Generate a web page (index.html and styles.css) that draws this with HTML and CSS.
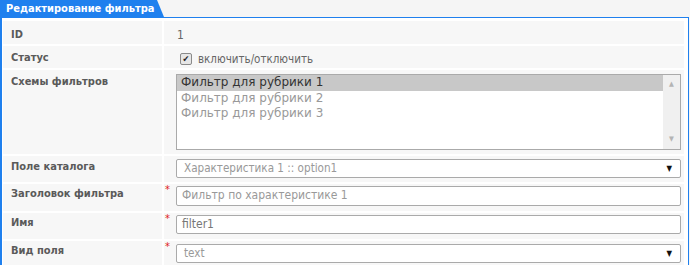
FILE: index.html
```html
<!DOCTYPE html>
<html lang="ru">
<head>
    <meta charset="UTF-8">
    <title>Редактирование фильтра</title>
    <link rel="stylesheet" href="styles.css">
</head>
<body>
    <div class="tab">Редактирование фильтра</div>
    <div class="box">
        <div class="row r-id">
            <div class="lbl">ID</div>
            <div class="val"><span class="plain">1</span></div>
        </div>
        <div class="row r-status">
            <div class="lbl">Статус</div>
            <div class="val">
                <span class="check"><span class="box-ch">&#10004;</span>включить/отключить</span>
            </div>
        </div>
        <div class="row r-list">
            <div class="lbl">Схемы фильтров</div>
            <div class="val">
                <div class="listbox">
                    <div class="opts">
                        <div class="opt sel">Фильтр для рубрики 1</div>
                        <div class="opt">Фильтр для рубрики 2</div>
                        <div class="opt">Фильтр для рубрики 3</div>
                    </div>
                    <div class="scroll"><span>&#9650;</span><span>&#9660;</span></div>
                </div>
            </div>
        </div>
        <div class="row r-cat">
            <div class="lbl">Поле каталога</div>
            <div class="val">
                <div class="field select">Характеристика 1 :: option1<span class="arr">&#9660;</span></div>
            </div>
        </div>
        <div class="row r-title">
            <div class="lbl">Заголовок фильтра</div>
            <div class="val">
                <span class="req">*</span>
                <div class="field">Фильтр по характеристике 1</div>
            </div>
        </div>
        <div class="row r-name">
            <div class="lbl">Имя</div>
            <div class="val">
                <span class="req">*</span>
                <div class="field dark">filter1</div>
            </div>
        </div>
        <div class="row r-type">
            <div class="lbl">Вид поля</div>
            <div class="val">
                <span class="req">*</span>
                <div class="field select">text<span class="arr">&#9660;</span></div>
            </div>
        </div>
    </div>
</body>
</html>
```

FILE: styles.css
```css
*{
    box-sizing: border-box;
}
body{
    margin: 0;
    background-color: #f5f5f5;
    font-family: "DejaVu Sans Condensed", "Liberation Sans", sans-serif;
    color: #555;
    overflow: hidden;
    height: 265px;
}
.tab{
    width: 164px;
    height: 17px;
    padding-left: 6px;
    background-color: #1f80ee;
    color: white;
    font-size: 11px;
    font-weight: bold;
    line-height: 17px;
    white-space: nowrap;
    clip-path: polygon(0 0, 157px 0, 164px 17px, 0 17px);
}
.box{
    width: 689px;
    height: 260px;
    border: 1px solid #1f80ee;
    border-left-width: 2px;
    background-color: white;
    padding: 3px 4px 0 1px;
    display: flex;
    flex-direction: column;
    gap: 2px;
}
.row{
    display: grid;
    grid-template-columns: 159px 1fr;
    gap: 2px;
    flex-shrink: 0;
}
.lbl,
.val{
    background-color: #f7f7f7;
}
.lbl{
    padding: 7px 0 0 8px;
    font-size: 11px;
    font-weight: bold;
    color: #5a5a5a;
}
.val{
    position: relative;
    padding: 3px 3px 0 12px;
    font-size: 12px;
}
.r-id{ height: 23px; }
.r-status{ height: 22px; }
.r-list{ height: 84px; }
.r-cat{ height: 26px; }
.r-title{ height: 27px; }
.r-name{ height: 26px; }
.r-type{ height: 26px; }
.r-status .lbl{ padding-top: 5px; }
.r-list .lbl{ padding-top: 5px; }
.r-cat .lbl{ padding-top: 4px; }
.r-title .lbl{ padding-top: 3px; }
.r-name .lbl{ padding-top: 3px; }
.r-type .lbl{ padding-top: 3px; }
.r-title .val,
.r-name .val{ padding-top: 2px; }

.plain{
    display: block;
    padding: 4px 0 0 1px;
    color: #666;
}
.check{
    display: flex;
    align-items: center;
    gap: 6px;
    font-size: 11.5px;
    color: #666;
    padding: 3px 0 0 4px;
}
.box-ch{
    width: 12px;
    height: 12px;
    border: 1px solid #8a8a8a;
    border-radius: 2px;
    background-color: #e6e6e6;
    color: #222;
    font-size: 9px;
    line-height: 11px;
    text-align: center;
}
.listbox{
    display: flex;
    height: 76px;
    margin-top: 1px;
    border: 1px solid #aaa;
    background-color: white;
}
.opts{
    flex: 1;
}
.opt{
    font-family: "DejaVu Sans", Verdana, sans-serif;
    color: #999;
    font-size: 12px;
    line-height: 15.5px;
    padding-left: 4px;
}
.opt.sel{
    background-color: #c8c8c8;
    color: #333;
}
.scroll{
    width: 17px;
    background-color: #f0f0f0;
    display: flex;
    flex-direction: column;
    justify-content: space-between;
    align-items: center;
    color: #b4b4b4;
    font-size: 7px;
    padding: 5px 0 6px;
}
.field{
    position: relative;
    height: 19px;
    border: 1px solid #aaa;
    border-radius: 2px;
    background-color: white;
    color: #999;
    font-size: 12px;
    line-height: 17px;
    padding-left: 5px;
}
.r-title .field{
    height: 20px;
}
.field.dark{
    color: #777;
}
.select{
    padding-left: 7px;
    font-size: 11.6px;
}
.arr{
    position: absolute;
    right: 8px;
    top: 0;
    color: #111;
    font-size: 8px;
}
.req{
    position: absolute;
    left: 1px;
    top: 0;
    color: #e02020;
    font-size: 11px;
    line-height: 11px;
}
```
